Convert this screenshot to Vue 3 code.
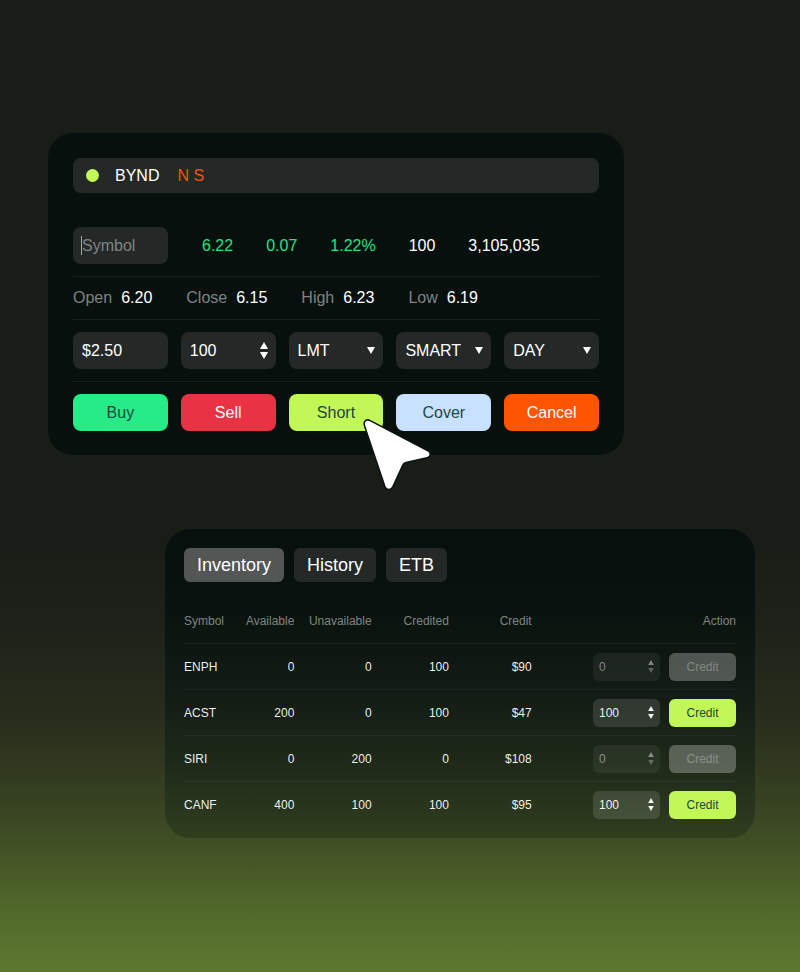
<template>
  <main class="page">
    <section class="card ticket" aria-label="Order ticket">
      <header class="alert-bar">
        <span class="dot"></span>
        <span>BYND</span>
        <span class="flags">N S</span>
      </header>

      <div class="row quote">
        <label class="field symbol">
          <span class="caret"></span>
          <input v-model="symbol" type="text" placeholder="Symbol" aria-label="Symbol" />
        </label>
        <div class="quote-values">
          <span v-for="item in quote" :key="item.text" :class="{ up: item.up }">{{ item.text }}</span>
        </div>
      </div>

      <dl class="stats">
        <div v-for="stat in stats" :key="stat.label">
          <dt>{{ stat.label }}</dt>
          <dd>{{ stat.value }}</dd>
        </div>
      </dl>

      <div class="row grid">
        <label class="field">
          <input v-model="price" type="text" aria-label="Price" />
        </label>
        <div class="field">
          <input v-model.number="quantity" type="text" aria-label="Quantity" />
          <span class="stepper">
            <button type="button" aria-label="Increase quantity" @click="quantity += 100">
              <svg viewBox="0 0 8 7"><path d="M4 0 8 7H0z" /></svg>
            </button>
            <button type="button" aria-label="Decrease quantity" @click="quantity -= 100">
              <svg viewBox="0 0 8 7"><path d="M0 0H8L4 7z" /></svg>
            </button>
          </span>
        </div>
        <label v-for="select in selects" :key="select.name" class="field">
          <select v-model="select.value" :aria-label="select.name">
            <option v-for="option in select.options" :key="option">{{ option }}</option>
          </select>
          <svg class="chevron" viewBox="0 0 8 7"><path d="M0 0H8L4 7z" /></svg>
        </label>
      </div>

      <div class="row grid">
        <button
          v-for="action in actions"
          :key="action"
          type="button"
          class="action"
          :class="action.toLowerCase()"
        >
          {{ action }}
          <svg v-if="action === 'Short'" class="pointer" viewBox="0 0 76 80" aria-hidden="true">
            <path
              d="M4.2 9.4C3 5.8 5.8 3.6 8.8 5.2L66.6 35.4C69.4 37 69 40.2 65.8 41L44.8 45.8Q42.2 46.4 41 49L31.2 70.2C29.8 73.6 25.8 73.4 24.6 70.2Z"
            />
          </svg>
        </button>
      </div>
    </section>

    <section class="card inventory" aria-label="Inventory">
      <nav class="tabs">
        <button
          v-for="tab in tabs"
          :key="tab"
          type="button"
          :class="{ active: tab === activeTab }"
          @click="activeTab = tab"
        >
          {{ tab }}
        </button>
      </nav>

      <table>
        <thead>
          <tr>
            <th class="narrow">Symbol</th>
            <th class="narrow">Available</th>
            <th class="wide">Unavailable</th>
            <th class="wide">Credited</th>
            <th class="credit-col">Credit</th>
            <th>Action</th>
          </tr>
        </thead>
        <tbody>
          <tr v-for="row in rows" :key="row.symbol">
            <td>{{ row.symbol }}</td>
            <td>{{ row.available }}</td>
            <td>{{ row.unavailable }}</td>
            <td>{{ row.credited }}</td>
            <td>${{ row.credit }}</td>
            <td>
              <div class="row-action">
                <div class="field small" :class="{ disabled: !row.enabled }">
                  <input
                    v-model.number="row.amount"
                    type="text"
                    :aria-label="row.symbol + ' amount'"
                    :disabled="!row.enabled"
                  />
                  <span class="stepper">
                    <button type="button" aria-label="Increase" :disabled="!row.enabled" @click="row.amount += 100">
                      <svg viewBox="0 0 8 7"><path d="M4 0 8 7H0z" /></svg>
                    </button>
                    <button type="button" aria-label="Decrease" :disabled="!row.enabled" @click="row.amount -= 100">
                      <svg viewBox="0 0 8 7"><path d="M0 0H8L4 7z" /></svg>
                    </button>
                  </span>
                </div>
                <button type="button" class="credit" :disabled="!row.enabled">Credit</button>
              </div>
            </td>
          </tr>
        </tbody>
      </table>
    </section>
  </main>
</template>

<script setup>
import { ref } from 'vue'

const symbol = ref('')
const price = ref('$2.50')
const quantity = ref(100)

const quote = [
  { text: '6.22', up: true },
  { text: '0.07', up: true },
  { text: '1.22%', up: true },
  { text: '100' },
  { text: '3,105,035' },
]

const stats = [
  { label: 'Open', value: '6.20' },
  { label: 'Close', value: '6.15' },
  { label: 'High', value: '6.23' },
  { label: 'Low', value: '6.19' },
]

const selects = ref([
  { name: 'Order type', value: 'LMT', options: ['LMT', 'MKT', 'STP'] },
  { name: 'Route', value: 'SMART', options: ['SMART', 'ARCA'] },
  { name: 'Time in force', value: 'DAY', options: ['DAY', 'GTC'] },
])

const actions = ['Buy', 'Sell', 'Short', 'Cover', 'Cancel']

const tabs = ['Inventory', 'History', 'ETB']
const activeTab = ref('Inventory')

const rows = ref([
  { symbol: 'ENPH', available: 0, unavailable: 0, credited: 100, credit: 90, amount: 0, enabled: false },
  { symbol: 'ACST', available: 200, unavailable: 0, credited: 100, credit: 47, amount: 100, enabled: true },
  { symbol: 'SIRI', available: 0, unavailable: 200, credited: 0, credit: 108, amount: 0, enabled: false },
  { symbol: 'CANF', available: 400, unavailable: 100, credited: 100, credit: 95, amount: 100, enabled: true },
])
</script>

<style>
body {
  background: #181d17;
}
</style>

<style scoped>
* {
  box-sizing: border-box;
}

.page {
  min-height: 100vh;
  padding: 133px 45px 48px 48px;
  font-family: "Liberation Sans", Arial, sans-serif;
  font-size: 16px;
  line-height: 20px;
  color: #fff;
  background: linear-gradient(
    #181d17 0%,
    #181d17 56%,
    #1e241a 66%,
    #272e1c 74%,
    #364021 82%,
    #445426 88%,
    #526a2b 94%,
    #5e7831 100%
  );
}

button,
input,
select {
  margin: 0;
  padding: 0;
  border: none;
  font: inherit;
  color: inherit;
  background: none;
}

button {
  cursor: pointer;
}

svg {
  display: block;
  fill: currentColor;
}

.card {
  width: 100%;
  border-radius: 25px;
}

/* order ticket */
.ticket {
  max-width: 576px;
  padding: 25px 25px 12px;
  background: #08100d;
}

.alert-bar {
  display: flex;
  align-items: center;
  height: 35px;
  margin-bottom: 22px;
  padding: 0 13px;
  border-radius: 8px;
  background: #242928;
}

.dot {
  width: 13px;
  height: 13px;
  margin-right: 16px;
  border-radius: 50%;
  background: #c1f756;
}

.flags {
  margin-left: 18px;
  color: #f45404;
}

.row {
  padding: 12px 0;
}

.grid {
  display: grid;
  grid-template-columns: repeat(5, 1fr);
  gap: 13px;
  border-top: 1px solid #171e1c;
}

.field {
  position: relative;
  display: flex;
  align-items: center;
  min-width: 0;
  height: 37px;
  padding: 0 8px 0 9px;
  border-radius: 8px;
  background: #242928;
}

.field input,
.field select {
  flex: 1;
  width: 0;
  min-width: 0;
  height: 100%;
  outline: none;
  appearance: none;
}

.field input::placeholder {
  color: #7f8382;
  opacity: 1;
}

.chevron {
  position: absolute;
  right: 8px;
  width: 8px;
  height: 7px;
  pointer-events: none;
}

.stepper {
  display: grid;
  gap: 3px;
}

.stepper svg {
  width: 8px;
  height: 7px;
}

.quote {
  display: flex;
  align-items: center;
  gap: 34px;
}

.symbol {
  width: 95px;
}

.caret {
  position: absolute;
  left: 8px;
  width: 1px;
  height: 19px;
  background: #a5a8a7;
}

.quote-values {
  display: flex;
  gap: 33px;
}

.up {
  color: #24e282;
}

.stats {
  display: flex;
  align-items: center;
  gap: 34px;
  height: 43px;
  margin: 0;
  border-top: 1px solid #171e1c;
}

.stats div {
  display: flex;
  gap: 9px;
}

.stats dt {
  color: #7f8382;
}

.stats dd {
  margin: 0;
}

.action {
  position: relative;
  height: 37px;
  border-radius: 8px;
  color: #1d4841;
}

.buy {
  background: #27eb87;
}

.sell {
  color: #fff;
  background: #e93345;
}

.short {
  z-index: 1;
  background: #c1f756;
}

.cover {
  background: #c8e1ff;
}

.cancel {
  color: #fff;
  background: #ff5500;
}

.pointer {
  position: absolute;
  top: 22px;
  left: 72px;
  width: 76px;
  height: 80px;
  fill: #fff;
  stroke: #0c1310;
  stroke-width: 3;
  paint-order: stroke;
}

/* inventory */
.inventory {
  max-width: 590px;
  margin: 74px 0 0 auto;
  padding: 19px 19px 11px;
  background: linear-gradient(#07100d 0%, #0a120f 25%, #121b14 52%, #1e2919 75%, #303e1f 100%);
}

.tabs {
  display: flex;
  gap: 10px;
}

.tabs button {
  height: 34px;
  padding: 0 13px;
  border-radius: 6px;
  font-size: 18px;
  background: #242928;
}

.tabs .active {
  background: #525655;
}

table {
  width: 100%;
  margin-top: 17px;
  border-spacing: 0;
  table-layout: fixed;
  font-size: 12px;
  line-height: 16px;
}

th,
td {
  height: 46px;
  padding: 0;
  text-align: right;
}

th {
  height: 44px;
  font-weight: normal;
  color: #7f8482;
}

th:first-child,
td:first-child {
  text-align: left;
}

td {
  border-top: 1px solid rgba(255, 255, 255, 0.05);
  color: rgba(255, 255, 255, 0.94);
}

.narrow {
  width: 10%;
}

.wide {
  width: 14%;
}

.credit-col {
  width: 15%;
}

.row-action {
  display: flex;
  justify-content: flex-end;
  gap: 9px;
}

.small {
  width: 67px;
  height: 28px;
  padding: 0 6px;
  border-radius: 6px;
  background: rgba(255, 255, 255, 0.12);
}

.small .stepper svg {
  width: 6px;
  height: 5px;
}

.small.disabled {
  color: rgba(255, 255, 255, 0.45);
  background: rgba(255, 255, 255, 0.06);
}

.disabled .stepper button:last-child {
  opacity: 0.6;
}

.credit {
  width: 67px;
  height: 28px;
  border-radius: 6px;
  color: #1d4841;
  background: #c1f756;
}

.credit:disabled {
  color: rgba(255, 255, 255, 0.3);
  background: rgba(255, 255, 255, 0.27);
}
</style>
